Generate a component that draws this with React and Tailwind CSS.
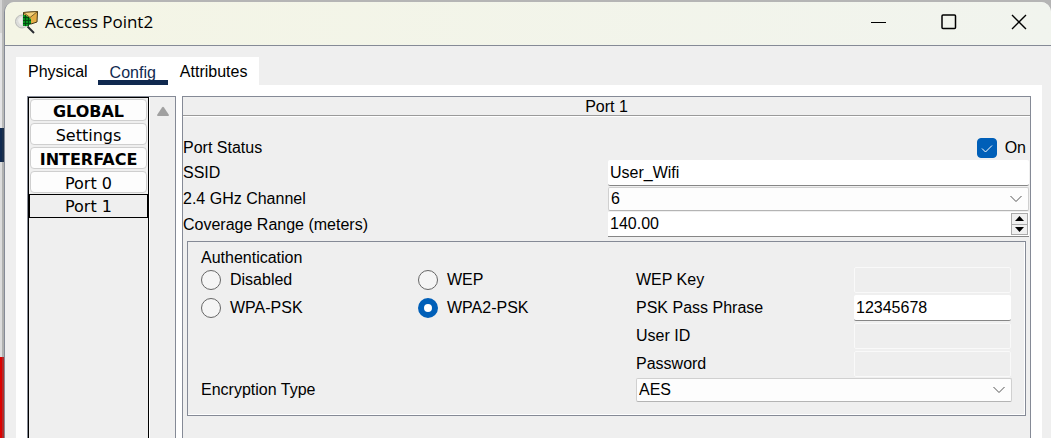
import { useState } from "react";

const sections = [
  { name: "GLOBAL", heading: true },
  { name: "Settings" },
  { name: "INTERFACE", heading: true },
  { name: "Port 0" },
  { name: "Port 1" },
];

function AppIcon() {
  return (
    <svg className="h-7 w-7 shrink-0" viewBox="0 0 28 28" aria-hidden="true">
      <path d="M13.500 18.500l6.500 6.500" stroke="#292b31" strokeWidth="2" />
      <circle cx="8" cy="13.500" r="6.500" fill="#dcdddb" stroke="#b9bab8" />
      <path d="M4 12q1-3 4-3v8q-3 0-4-5z" fill="#eeeeea" />
      <path d="M9.500 4.500L23.500 3.500 23 14l-6 2-7.500-1z" fill="#e3ad45" stroke="#443719" />
      <path d="M9.500 4.500L16 9.500l7.500-6z" fill="#f3cf78" stroke="#5b461b" strokeWidth=".8" />
      <path d="M9 6.500l4 1.500 4 3v4.500L14 18H9z" fill="#079320" />
      <path d="M9 9.500h6M9 12.500h8M9 15.500h8M11.500 7v11M14.500 9v9" stroke="#034510" strokeWidth=".9" />
    </svg>
  );
}

function Chevron() {
  return (
    <svg className="pointer-events-none absolute top-1/2 right-[7px] h-3 w-3 -translate-y-1/2" viewBox="0 0 12 12" fill="none" stroke="#555" aria-hidden="true">
      <path d="M.5 3L6 8.500 11.500 3" />
    </svg>
  );
}

function Select({ id, options }) {
  return (
    <div className="relative h-6">
      <select id={id} className="block h-6 w-full appearance-none rounded-xs border border-[#d0d0d0] border-b-[#b4b4b4] bg-[#fdfdfd] px-[2px] leading-5 outline-none">
        {options.map((o) => <option key={o}>{o}</option>)}
      </select>
      <Chevron />
    </div>
  );
}

function TextField({ id, label, value = "", disabled = false, type = "text" }) {
  return (
    <>
      <label htmlFor={id}>{label}</label>
      <input
        id={id}
        type={type}
        defaultValue={value}
        disabled={disabled}
        className="block h-[26px] w-full min-w-0 rounded-xs border-b border-[#868686] bg-white px-[2px] outline-none disabled:border disabled:border-[#f9f9f9] disabled:bg-[#eeeeee]"
      />
    </>
  );
}

function Radio({ label, value, onChange }) {
  return (
    <label className="flex h-5 items-center gap-[9px]">
      <input
        type="radio"
        name="authentication"
        checked={value === label}
        onChange={() => onChange(label)}
        className="h-5 w-5 shrink-0 appearance-none rounded-full border border-[#666] bg-[#f5f5f5] checked:border-6 checked:border-[#005fb8] checked:bg-white"
      />
      {label}
    </label>
  );
}

export default function App() {
  const [section, setSection] = useState("Port 1");
  const [auth, setAuth] = useState("WPA2-PSK");
  const [range, setRange] = useState("140.00");
  const step = (n) => setRange((r) => (Number(r) + n).toFixed(2));

  return (
    <div className="flex h-screen overflow-hidden bg-[#b5b5b5] font-['Liberation_Sans',Arial,sans-serif] text-[16px] leading-5 text-black">
      <div className="flex w-1 shrink-0 flex-col" aria-hidden="true">
        <div className="h-[33px] border-r-2 border-[#b9b9b9] bg-[#d4d4d4]" />
        <div className="h-[95px] border-r-2 border-[#b9bab9] bg-[#e4e4e6]" />
        <div className="h-[34px] border-r-2 border-[#1c2f4a] bg-[#10294f]" />
        <div className="h-[195px] border-r-2 border-[#b0b1b0] bg-[#dcdcdc]" />
        <div className="flex-1 border-r-2 border-[#b02a2a] bg-[#dc0000]" />
      </div>
      <div className="mt-[2px] flex min-w-0 flex-1 flex-col overflow-hidden rounded-t-[10px] border-l border-[#858a96] bg-[#efefef]">
        <header className="flex h-11 shrink-0 items-center border-b border-[#858a96] bg-linear-to-r from-[#f4f5e5] to-[#f1f4ee] pb-[3px] pl-[9px]">
          <AppIcon />
          <h1 className="ml-[3px] flex-1 font-['Open_Sans',sans-serif] text-[17px]">Access Point2</h1>
          <div className="flex gap-[6px] text-black">
            <button aria-label="Minimize" className="grid h-10 w-16 place-items-center">
              <svg className="h-4 w-4" viewBox="0 0 16 16" stroke="currentColor" aria-hidden="true"><path d="M0 8.500h15" /></svg>
            </button>
            <button aria-label="Maximize" className="grid h-10 w-16 place-items-center">
              <svg className="h-4 w-4" viewBox="0 0 16 16" fill="none" stroke="currentColor" strokeWidth="1.500" aria-hidden="true"><rect x="1" y="1" width="13.500" height="13.500" rx="1" /></svg>
            </button>
            <button aria-label="Close" className="grid h-10 w-16 place-items-center">
              <svg className="h-4 w-4" viewBox="0 0 16 16" stroke="currentColor" strokeWidth="1.400" aria-hidden="true"><path d="M1 1l14 14M15 1L1 15" /></svg>
            </button>
          </div>
        </header>

        <main className="flex min-h-0 flex-1 flex-col pt-[11px] pr-[9px] pl-[11px]">
          <nav className="flex h-7 shrink-0 self-start bg-white pl-[2px]" aria-label="Device tabs">
            <button className="px-[10px] pt-[2px]">Physical</button>
            <button aria-current="page" className="border-b-5 border-[#10294f] px-3 pt-[6px] text-[#10294f]">Config</button>
            <button className="px-3 pt-[2px]">Attributes</button>
          </nav>

          <div className="flex min-h-0 flex-1 gap-[6px] bg-white pt-[11px] pr-[11px] pl-[11px]">
            <aside className="flex w-[149px] shrink-0 border border-b-0 border-[#858a96] bg-[#efefef]">
              <div className="flex w-[121px] flex-col border-x border-t border-black font-['DejaVu_Sans',Verdana,sans-serif]">
                {sections.map(({ name, heading }) => (
                  <button
                    key={name}
                    onClick={() => !heading && setSection(name)}
                    className={
                      name === section
                        ? "h-6 border border-black pt-[2px] leading-5"
                        : heading
                          ? "m-px h-[22px] rounded-sm border border-[#cfcfcf] bg-[#fdfdfd] pt-[2px] font-bold leading-5"
                          : "m-px h-[22px] rounded-sm border border-[#cfcfcf] bg-[#fdfdfd] pt-[2px] leading-5"
                    }
                  >
                    {name}
                  </button>
                ))}
              </div>
              <button aria-label="Scroll up" className="flex flex-1 items-start justify-center border-l border-white pt-[9px]">
                <svg className="h-3 w-3" viewBox="0 0 12 12" fill="#a0a0a0" aria-hidden="true"><path d="M5 1.500Q6 0 7 1.500L12 9Q12 10 11 10H1Q0 10 0 9z" /></svg>
              </button>
            </aside>

            <section className="min-w-0 flex-1 border border-b-0 border-[#858a96] bg-[#efefef]">
              <h2 className="h-[19px] border-b border-[#9a9a9a] text-center leading-5 shadow-[0_1px_0_#fff]">Port 1</h2>
              <form className="pt-5" onSubmit={(e) => e.preventDefault()}>
                <div className="flex h-6 items-center justify-between pr-1">
                  <span>Port Status</span>
                  <label className="flex items-center gap-2">
                    <span className="relative h-5 w-5">
                      <input type="checkbox" defaultChecked className="peer block h-5 w-5 appearance-none rounded-[4px] border border-[#666] bg-white checked:border-[#005fb8] checked:bg-[#005fb8]" />
                      <svg className="pointer-events-none absolute inset-0 hidden h-5 w-5 peer-checked:block" viewBox="0 0 20 20" fill="none" stroke="#fff" aria-hidden="true"><path d="M5 10.500l3.500 3.500 6.500-6.500" /></svg>
                    </span>
                    On
                  </label>
                </div>
                <div className="grid grid-cols-[425fr_421fr] items-center gap-y-px pr-px">
                  <TextField id="ssid" label="SSID" value="User_Wifi" />
                  <label htmlFor="channel">2.4 GHz Channel</label>
                  <Select id="channel" options={["6", "1", "11"]} />
                  <label htmlFor="range">Coverage Range (meters)</label>
                  <div className="flex h-[25px] border-b border-[#868686] bg-white">
                    <input id="range" value={range} onChange={(e) => setRange(e.target.value)} className="min-w-0 flex-1 px-[2px] outline-none" />
                    <div className="my-px mr-px flex w-[17px] flex-col border border-[#aaa] bg-[#f0f0f0]">
                      <button type="button" aria-label="Increase range" onClick={() => step(1)} className="grid flex-1 place-items-center border-b border-[#aaa]">
                        <svg className="h-[5px] w-[9px]" viewBox="0 0 9 5" aria-hidden="true"><path d="M0 5L4.500 0 9 5z" /></svg>
                      </button>
                      <button type="button" aria-label="Decrease range" onClick={() => step(-1)} className="grid flex-1 place-items-center">
                        <svg className="h-[5px] w-[9px]" viewBox="0 0 9 5" aria-hidden="true"><path d="M0 0h9L4.500 5z" /></svg>
                      </button>
                    </div>
                  </div>
                </div>

                <fieldset className="mx-1 mt-1 border border-[#858a96] px-[13px] pt-[6px] pb-[13px] shadow-[inset_-1px_-1px_0_#fff]">
                  <div className="grid grid-cols-[217fr_218fr_376fr] gap-y-px">
                    <div className="col-span-2">
                      <p>Authentication</p>
                      <div className="mt-[2px] grid grid-cols-[217fr_218fr] gap-y-2">
                        {["Disabled", "WEP", "WPA-PSK", "WPA2-PSK"].map((a) => (
                          <Radio key={a} label={a} value={auth} onChange={setAuth} />
                        ))}
                      </div>
                    </div>
                    <div className="mt-[19px] grid grid-cols-[218fr_157fr] items-center gap-y-[2px] pr-px">
                      <TextField id="wep" label="WEP Key" disabled />
                      <TextField id="psk" label="PSK Pass Phrase" value="12345678" />
                      <TextField id="user" label="User ID" disabled />
                      <TextField id="password" label="Password" type="password" disabled />
                    </div>
                    <label htmlFor="encryption" className="col-span-2 self-center">Encryption Type</label>
                    <Select id="encryption" options={["AES", "TKIP"]} />
                  </div>
                </fieldset>
              </form>
            </section>
          </div>
        </main>
      </div>
    </div>
  );
}
